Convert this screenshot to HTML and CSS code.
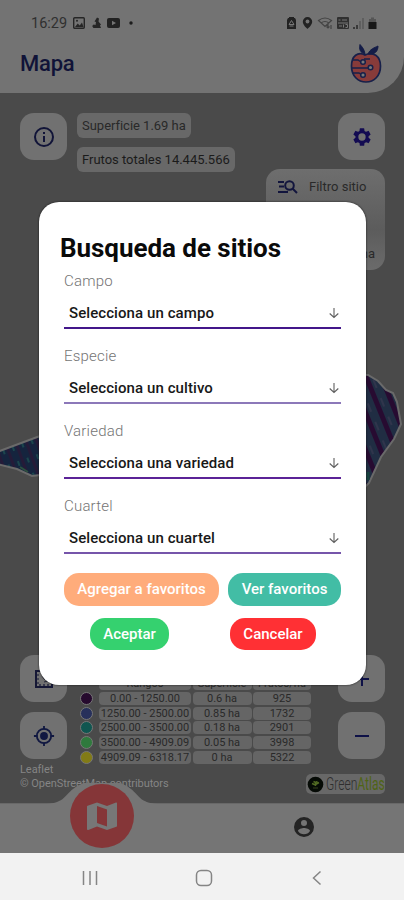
FILE: index.html
```html
<!DOCTYPE html>
<html lang="es">
<head>
<meta charset="utf-8">
<title>Mapa</title>
<link rel="stylesheet" href="styles.css">
</head>
<body>
<div class="screen">
  <div class="top">
    <header class="header">
      <div class="status">
        <span class="clock">16:29</span>
        <svg class="status-left" width="62" height="14" viewBox="0 0 62 14">
          <rect x="1.7" y="1.7" width="10.6" height="10.6" rx="1" fill="none" stroke="#262626" stroke-width="1.4"/>
          <path d="M3 11l2.700-3.500 2 2L10 6.500l1.500 4.500z" fill="#262626"/>
          <circle cx="5" cy="4.700" r="1" fill="#262626"/>
          <path d="M25 1.500l2 1-.5 3 2.500 3-1 1 1 2.500h-7.500l-1-2 3-1 .5-3-1.500-.5z" fill="#262626"/>
          <circle cx="22" cy="10" r="1.500" fill="#262626"/>
          <rect x="35" y="2" width="13" height="10" rx="2" fill="#222"/>
          <path d="M40 4.800v4.400l4-2.200z" fill="#737373"/>
          <circle cx="59" cy="7" r="1.700" fill="#1c1c1c"/>
        </svg>
        <svg class="status-right" width="92" height="14" viewBox="0 0 92 14">
          <path d="M3 2h1V1h5v1h1l1 2v9H2V4z" fill="#222"/>
          <path d="M6.500 4.500l2.500 4H4zM4.500 10h4" fill="none" stroke="#777" stroke-width="1"/>
          <path d="M22.500 1a4.700 4.700 0 0 0-4.700 4.700c0 3.300 4.700 7.300 4.700 7.300s4.700-4 4.700-7.300A4.700 4.700 0 0 0 22.500 1z" fill="#222"/>
          <circle cx="22.500" cy="5.500" r="1.900" fill="#737373"/>
          <path d="M33.500 4.500q6.500-5 13 0L40 10.500zM36 7q4-3 8 0M43 8v4m-1.500-1.500L43 12l1.500-1.500M46 13V9" fill="none" stroke="#444" stroke-width="1.200"/>
          <rect x="52" y="1" width="12" height="12" rx="1" fill="#303030"/>
          <path d="M53.500 4h2m1.500 0h5M53 7h10M54 10h3m1.500-1.500v3m2-3h2v3h-2" stroke="#777" stroke-width="1" fill="none"/>
          <path d="M69 13v-2M72 13V9" stroke="#303030" stroke-width="1.700"/>
          <path d="M75 13V5M78 13V2" stroke="#595959" stroke-width="1.500"/>
          <path d="M84 3h2V1.500h3V3h2v10h-7z" fill="#555"/>
          <path d="M83.500 6h8v7h-8z" fill="#181818"/>
        </svg>
      </div>
      <div class="title-row">
        <h1 class="title">Mapa</h1>
        <svg class="logo" width="32" height="40" viewBox="0 0 32 40">
          <path d="M15 12C8 8 1.500 13 1.500 23S8 39 16 39s14.500-6 14.500-16S23 8 15 12z" fill="#873b3a" stroke="#17204a" stroke-width="1.700"/>
          <path d="M15 11C14 5 11 3 10 1.500c-1 5 0 8 5 9.500zM18 11c2-5 6-6 10-8 0 5-3 9-10 8z" fill="#141c47" stroke="#141c47"/>
          <path d="M3 17h5l3 2M2 25h16M3 30h6l3 2M14 16h6" fill="none" stroke="#17204a" stroke-width="1.300"/>
          <circle cx="13" cy="19" r="2.300" fill="#777" stroke="#17204a" stroke-width="1.500"/>
          <circle cx="20.500" cy="24.500" r="2.300" fill="#777" stroke="#17204a" stroke-width="1.500"/>
          <circle cx="13" cy="32" r="2.300" fill="#777" stroke="#17204a" stroke-width="1.500"/>
        </svg>
      </div>
    </header>
  </div>

  <main class="map">
    <svg class="field" width="404" height="150" viewBox="0 0 404 150">
      <defs>
        <pattern id="rows" width="14" height="20" patternUnits="userSpaceOnUse" patternTransform="rotate(-22)">
          <rect width="14" height="20" fill="#202d43"/>
          <rect width="5" height="20" fill="#270b31"/>
          <rect x="7" y="5" width="2" height="9" fill="#30354c"/>
        </pattern>
        <pattern id="rows-left" width="10" height="16" patternUnits="userSpaceOnUse" patternTransform="rotate(-20)">
          <rect width="10" height="16" fill="#15243e"/>
          <rect width="3" height="16" fill="#251b38"/>
          <rect x="6" y="8" width="2" height="5" fill="#1b464d"/>
        </pattern>
      </defs>
      <path d="M-3 78L40 62v39l-8 1-15-7-20-5z" fill="url(#rows-left)" stroke="#6a6a6a" stroke-width="2"/>
      <path d="M20 93l8 5" stroke="#2c5140" stroke-width="2"/>
      <path d="M360 0l8 1 10 6 8 9 7 3 4 9 4 22-7 15-13 18-12 26-9 9z" fill="url(#rows)" stroke="#6a6a6a" stroke-width="2"/>
      <path d="M368 98v8" stroke="#17443f" stroke-width="3"/>
    </svg>

    <section class="tools">
      <button class="tool">
        <svg width="24" height="24" viewBox="0 0 24 24"><path fill="#111438" d="M11 7h2v2h-2zm0 4h2v6h-2zm1-9a10 10 0 1 0 0 20 10 10 0 0 0 0-20zm0 18a8 8 0 1 1 0-16 8 8 0 0 1 0 16z"/></svg>
      </button>
      <div class="chips">
        <span class="chip">Superficie 1.69 ha</span>
        <span class="chip dark">Frutos totales 14.445.566</span>
      </div>
      <div class="tools-right">
        <button class="tool">
          <svg width="22" height="22" viewBox="0 0 24 24"><path fill="#130b52" fill-rule="evenodd" d="M19.140 12.940c.04-.3.060-.61.060-.94s-.02-.64-.07-.94l2.030-1.580a.5.5 0 0 0 .12-.61l-1.920-3.320a.5.5 0 0 0-.59-.22l-2.390.96a7 7 0 0 0-1.620-.94l-.36-2.540a.5.5 0 0 0-.48-.41h-3.840a.5.5 0 0 0-.47.410l-.36 2.540a7 7 0 0 0-1.620.94l-2.390-.96a.5.5 0 0 0-.59.220L2.740 8.870a.5.5 0 0 0 .12.610l2.030 1.580a7 7 0 0 0 0 1.880l-2.030 1.580a.5.5 0 0 0-.12.610l1.920 3.320c.12.220.37.290.59.220l2.390-.96c.5.380 1.030.700 1.620.940l.36 2.540c.05.240.24.410.480.410h3.840c.24 0 .44-.17.470-.41l.36-2.540a7 7 0 0 0 1.620-.94l2.390.96c.22.080.47 0 .59-.22l1.920-3.320a.5.5 0 0 0-.12-.61zM12 16a4 4 0 1 1 0-8 4 4 0 0 1 0 8z"/></svg>
        </button>
        <div class="filter">
          <div class="filter-head">
            <svg width="22" height="16" viewBox="0 0 22 16"><path d="M1 3h6M2 7.500h5M1 13h10" stroke="#12153d" stroke-width="2"/><circle cx="12.500" cy="6.500" r="4.300" fill="none" stroke="#12153d" stroke-width="2"/><path d="M15.500 9.500l4.500 4.500" stroke="#12153d" stroke-width="2"/></svg>
            <span>Filtro sitio</span>
          </div>
          <div class="filter-value">1.69 ha</div>
        </div>
      </div>
    </section>

    <section class="lower">
      <div class="stack">
        <button class="tool">
          <svg width="22" height="22" viewBox="0 0 22 22"><path d="M3 3h16v16H3z" fill="none" stroke="#151735" stroke-width="2"/><path d="M4 7h2M4 11h2M4 15h2M7 18v-2M11 18v-2M15 18v-2" stroke="#151735" stroke-width="1.200"/><path d="M9 8l3 4 4-3M11 14l4-1" stroke="#242638" fill="none"/></svg>
        </button>
        <button class="tool">
          <svg width="22" height="22" viewBox="0 0 24 24"><circle cx="12" cy="12" r="4.300" fill="#111841"/><circle cx="12" cy="12" r="7.800" fill="none" stroke="#111841" stroke-width="2"/><path d="M12 1v4M12 19v4M1 12h4M19 12h4" stroke="#111841" stroke-width="2"/></svg>
        </button>
      </div>
      <div class="legend">
        <i></i><b>Rangos</b><b>Superficie</b><b>Frutos/ha</b>
        <i class="dot violet"></i><b>0.00 - 1250.00</b><b>0.6 ha</b><b>925</b>
        <i class="dot blue"></i><b>1250.00 - 2500.00</b><b>0.85 ha</b><b>1732</b>
        <i class="dot teal"></i><b>2500.00 - 3500.00</b><b>0.18 ha</b><b>2901</b>
        <i class="dot green"></i><b>3500.00 - 4909.09</b><b>0.05 ha</b><b>3998</b>
        <i class="dot yellow"></i><b>4909.09 - 6318.17</b><b>0 ha</b><b>5322</b>
      </div>
      <div class="stack">
        <button class="tool"><svg width="20" height="20" viewBox="0 0 20 20"><path d="M10 3v14M3 10h14" stroke="#0e1147" stroke-width="2"/></svg></button>
        <button class="tool"><svg width="20" height="20" viewBox="0 0 20 20"><path d="M3 10h14" stroke="#0e1147" stroke-width="2"/></svg></button>
      </div>
    </section>

    <footer class="credits">
      <div class="attribution"><div>Leaflet</div><div>© OpenStreetMap contributors</div></div>
      <div class="atlas">
        <svg width="17" height="17" viewBox="0 0 17 17"><circle cx="8.500" cy="8.500" r="7.800" fill="#060b06"/><path d="M8.500 10V6M8.500 9L5 7.500M8.500 8.500L12 6.500M6.500 5.500l2 1 2-1" stroke="#526b23" stroke-width="1.500"/><path d="M6 12h5" stroke="#34401f"/></svg>
        <span class="atlas-name">Green<em>Atlas</em></span>
      </div>
    </footer>
  </main>

  <nav class="tabs">
    <svg class="tab-hump" width="120" height="70" viewBox="0 0 120 70">
      <path d="M0 21C22 21 22 13 31 6Q42-3 60-3T89 6C98 13 98 21 120 21V70H0z" fill="#757575"/>
      <circle cx="60" cy="33" r="32" fill="#853638"/>
      <path d="M74.500 19.500l-.5.100-9 3.400-10-3.500-9.400 3.200c-.4.100-.6.400-.6.800v22.700c0 .5.400.8.800.8l.5-.1 8.700-3.400 10 3.500 9.400-3.200c.4-.1.600-.4.600-.8V20.300c0-.5-.3-.8-.5-.8zM65 43.500l-10-3.500V23l10 3.500z" fill="#777"/>
    </svg>
    <svg class="account" width="24" height="24" viewBox="0 0 24 24"><path fill="#242424" d="M12 2a10 10 0 1 0 0 20 10 10 0 0 0 0-20zm0 3a3 3 0 1 1 0 6 3 3 0 0 1 0-6zm0 14.200a7.200 7.200 0 0 1-6-3.220c.03-1.990 4-3.080 6-3.080s5.970 1.090 6 3.080a7.200 7.200 0 0 1-6 3.220z"/></svg>
  </nav>

  <div class="system">
    <svg width="18" height="18" viewBox="0 0 18 18"><path d="M2.500 2v14M9 2v14M15.500 2v14" stroke="#858585" stroke-width="1.500"/></svg>
    <svg width="18" height="18" viewBox="0 0 18 18"><rect x="1.500" y="1.500" width="15" height="15" rx="4.500" fill="none" stroke="#858585" stroke-width="1.500"/></svg>
    <svg width="18" height="18" viewBox="0 0 18 18"><path d="M12.500 2.500L5.500 9l7 6.500" fill="none" stroke="#858585" stroke-width="1.500"/></svg>
  </div>

  <div class="dialog" role="dialog">
    <h2>Busqueda de sitios</h2>
    <div class="group">
      <label>Campo</label>
      <div class="select indigo"><span>Selecciona un campo</span><svg width="12" height="12" viewBox="0 0 12 12"><path d="M6 1v9.500M1.700 6.500L6 10.500l4.300-4" /></svg></div>
    </div>
    <div class="group">
      <label>Especie</label>
      <div class="select lilac"><span>Selecciona un cultivo</span><svg width="12" height="12" viewBox="0 0 12 12"><path d="M6 1v9.500M1.700 6.500L6 10.500l4.300-4" /></svg></div>
    </div>
    <div class="group">
      <label>Variedad</label>
      <div class="select purple"><span>Selecciona una variedad</span><svg width="12" height="12" viewBox="0 0 12 12"><path d="M6 1v9.500M1.700 6.500L6 10.500l4.300-4" /></svg></div>
    </div>
    <div class="group">
      <label>Cuartel</label>
      <div class="select violet-line"><span>Selecciona un cuartel</span><svg width="12" height="12" viewBox="0 0 12 12"><path d="M6 1v9.500M1.700 6.500L6 10.500l4.300-4" /></svg></div>
    </div>
    <div class="actions first">
      <button class="pill orange">Agregar a favoritos</button>
      <button class="pill sea">Ver favoritos</button>
    </div>
    <div class="actions second">
      <button class="pill accept">Aceptar</button>
      <button class="pill cancel">Cancelar</button>
    </div>
  </div>
</div>
</body>
</html>
```
FILE: styles.css
```css
* { box-sizing: border-box; }
body { margin: 0; font-family: Roboto, "Liberation Sans", sans-serif; }
button { border: 0; padding: 0; font: inherit; }
svg { display: block; flex: none; }
h1, h2 { margin: 0; }

.screen {
  position: relative;
  display: flex;
  flex-direction: column;
  width: 404px;
  height: 900px;
  overflow: hidden;
  background: #4a4a4a;
}

.top { background: #4a4a4a; }
.header {
  height: 93px;
  padding: 16px 22px 0 20px;
  background: #737373;
  border-bottom-right-radius: 36px;
}
.status { display: flex; align-items: center; height: 14px; padding-left: 11px; }
.clock { width: 41px; font-size: 14.5px; color: #303030; white-space: nowrap; }
.status-right { margin-left: auto; margin-right: 5px; }
.title-row { display: flex; justify-content: space-between; margin-top: 13px; }
.title { font-size: 22px; line-height: 41px; font-weight: 500; letter-spacing: -0.2px; color: #101338; }

.map {
  position: relative;
  display: flex;
  flex-direction: column;
  height: 710px;
  padding: 20px 19px 0 20px;
}
.field { position: absolute; left: 0; top: 281px; }
.tool {
  display: flex;
  align-items: center;
  justify-content: center;
  width: 47px;
  height: 47px;
  flex: none;
  border-radius: 14px;
  background: #717171;
}
.tools { display: flex; height: 542px; }
.chips { display: flex; flex-direction: column; align-items: flex-start; gap: 9.5px; margin-left: 10px; }
.chip {
  height: 24.5px;
  padding: 0 5px;
  border-radius: 6px;
  background: #686868;
  color: #292929;
  font-size: 13px;
  line-height: 25px;
  letter-spacing: -0.02px;
  white-space: nowrap;
}
.dark { color: #1b1b1b; }
.tools-right { display: flex; flex-direction: column; align-items: flex-end; gap: 9px; margin-left: auto; }
.filter {
  display: flex;
  flex-direction: column;
  justify-content: space-between;
  width: 119px;
  height: 101px;
  padding: 9px 10px 9px 11px;
  border-radius: 14px;
  background: linear-gradient(#6e6e6e, #5c5c5c 60%, #6b6b6b);
  color: #292929;
  font-size: 13px;
}
.filter-head { display: flex; align-items: center; gap: 10px; line-height: 17px; white-space: nowrap; }
.filter-value { text-align: right; line-height: 15px; }

.lower { display: flex; height: 106px; }
.stack { display: flex; flex-direction: column; gap: 10px; }
.legend {
  display: grid;
  grid-template-columns: 18px 92px 59px 58px;
  grid-auto-rows: 13px;
  column-gap: 1.5px;
  row-gap: 1.8px;
  align-content: start;
  margin-left: 12.5px;
  margin-right: auto;
  padding-top: 22px;
}
.legend b {
  border-radius: 4px;
  background: #656565;
  color: #292929;
  font-size: 11px;
  font-weight: 400;
  line-height: 13px;
  text-align: center;
  white-space: nowrap;
}
.dot { width: 13px; height: 13px; border: 1px solid #777; border-radius: 50%; }
.violet { background: #260a2e; }
.blue { background: #27305b; }
.teal { background: #105650; }
.green { background: #2f7a3d; }
.yellow { background: #827b16; }

.credits { display: flex; justify-content: space-between; }
.attribution { padding-top: 2px; color: #858585; font-size: 11px; line-height: 13.5px; letter-spacing: -0.05px; white-space: nowrap; }
.atlas {
  display: flex;
  align-items: center;
  width: 79px;
  height: 20px;
  margin-top: 13px;
  padding-left: 1px;
  border-radius: 5px;
  background: #686868;
}
.atlas-name {
  width: 57px;
  margin-left: 2px;
  color: #2e2e2e;
  font-size: 18px;
  line-height: 20px;
  font-weight: 300;
  white-space: nowrap;
  transform: scaleX(0.67);
  transform-origin: left;
}
.atlas-name em { color: #4f6415; font-style: normal; font-weight: 400; }

.tabs { position: relative; height: 50px; background: #757575; border-top: 1px solid #686868; }
.tab-hump { position: absolute; left: 41.5px; top: -21px; }
.account { margin: 11px 0 0 292px; }

.system {
  display: flex;
  justify-content: space-between;
  height: 47px;
  padding: 16px 78px 0 81px;
  background: #f2f2f2;
}

.dialog {
  position: absolute;
  left: 39px;
  top: 202px;
  width: 327px;
  height: 483px;
  padding: 28px 25px 0;
  border-radius: 20px;
  background: #fff;
  box-shadow: 0 0 2px #111;
}
.dialog h2 {
  height: 36px;
  margin-left: -4px;
  color: #0a0a0a;
  font-size: 26px;
  line-height: 36px;
  font-weight: 700;
  letter-spacing: -0.05px;
  white-space: nowrap;
}
.group { height: 75px; padding-top: 5px; }
.group label { display: block; color: #747474; font-size: 15px; line-height: 20px; font-weight: 300; letter-spacing: 0.2px; }
.select {
  display: flex;
  align-items: center;
  justify-content: space-between;
  height: 38px;
  padding: 8px 1px 0 5px;
  border-bottom: 2px solid;
}
.select span { color: #181818; font-size: 15px; font-weight: 500; letter-spacing: 0.08px; }
.select path { fill: none; stroke: #606060; stroke-width: 1.100; }
.indigo { border-color: #43178a; }
.lilac { border-color: #8c78b9; }
.purple { border-color: #5b2397; }
.violet-line { border-color: #7655aa; }

.actions { display: flex; }
.first { justify-content: space-between; margin-top: 7px; }
.second { gap: 61px; margin: 12px 0 0 26px; }
.pill {
  height: 32.5px;
  border-radius: 15px;
  color: #fff;
  font-size: 15px;
  font-weight: 500;
  white-space: nowrap;
}
.orange { width: 155px; background: #ffac7b; }
.sea { width: 113px; background: #42bda5; }
.accept { width: 79px; background: #35d16f; }
.cancel { width: 86px; background: #ff3034; }
```
